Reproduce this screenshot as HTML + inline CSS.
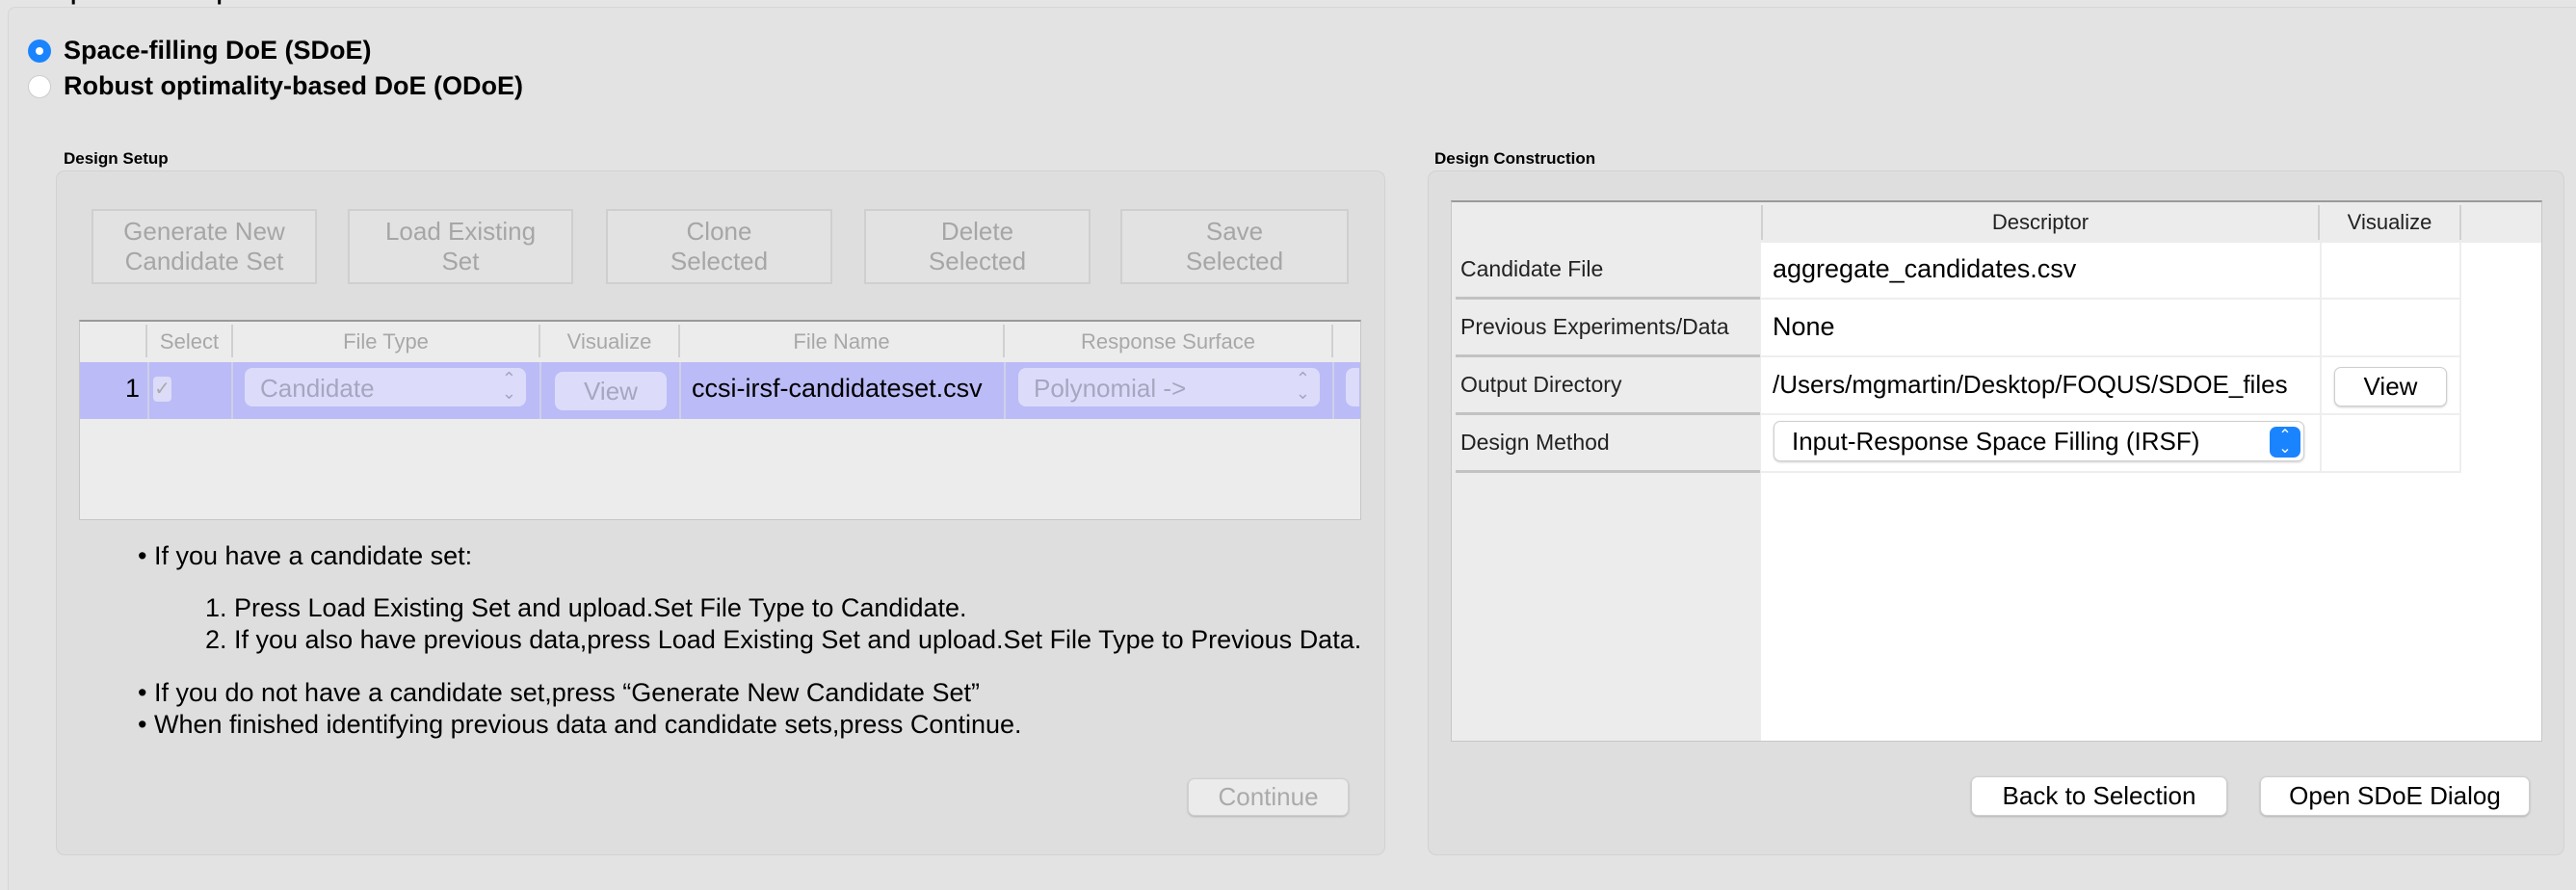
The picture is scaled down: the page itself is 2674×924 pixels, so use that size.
<!DOCTYPE html>
<html style="overflow:hidden;height:924px"><head><meta charset="utf-8"><style>
*{box-sizing:border-box;margin:0;padding:0}
body{width:2674px;height:924px;background:#e5e5e5;font-family:"Liberation Sans",sans-serif;position:relative;overflow:hidden;color:#000}
.a{position:absolute}
.outer{left:8px;top:7px;width:2680px;height:917px;border:1px solid #d6d6d6;border-bottom:none;border-radius:8px 8px 0 0;background:#e3e3e3}
.radio{width:24px;height:24px;border-radius:50%}
.lbl{font-size:27px;font-weight:bold;white-space:nowrap}
.grp{background:#dedede;border:1px solid #d2d2d2;border-radius:9px}
.btn{border:2px solid #cfcfcf;background:#e2e2e2;color:#a6a6a6;font-size:26px;text-align:center;line-height:31px;display:flex;align-items:center;justify-content:center}
.th{font-size:22px;color:#a8a8a8;text-align:center;line-height:36px;border-right:2px solid #d0d0d0}
.txt{font-size:27px;white-space:nowrap}
.pb{background:#fff;border:1px solid #cfcfcf;border-radius:7px;box-shadow:0 1px 2px rgba(0,0,0,.2);font-size:26px;text-align:center}
.rl{font-size:23px;color:#222;white-space:nowrap}
</style></head><body>
<div class="a outer"></div>
<div class="a" style="left:56px;top:-20px;font-size:22px;font-weight:bold">Options and Steps</div>
<div class="a radio" style="left:29px;top:41px;background:#1a84ff"></div>
<div class="a radio" style="left:37px;top:49px;width:8px;height:8px;background:#fff"></div>
<div class="a lbl" style="left:66px;top:37px">Space-filling DoE (SDoE)</div>
<div class="a radio" style="left:29px;top:78px;background:#fff;border:1px solid #ccc"></div>
<div class="a lbl" style="left:66px;top:74px">Robust optimality-based DoE (ODoE)</div>

<div class="a" style="left:66px;top:155px;font-size:17px;font-weight:bold">Design Setup</div>
<div class="a grp" style="left:58px;top:177px;width:1380px;height:711px"></div>
<div class="a btn" style="left:95px;top:217px;width:234px;height:78px">Generate New<br>Candidate Set</div>
<div class="a btn" style="left:361px;top:217px;width:234px;height:78px">Load Existing<br>Set</div>
<div class="a btn" style="left:629px;top:217px;width:235px;height:78px">Clone<br>Selected</div>
<div class="a btn" style="left:897px;top:217px;width:235px;height:78px">Delete<br>Selected</div>
<div class="a btn" style="left:1163px;top:217px;width:237px;height:78px">Save<br>Selected</div>

<div class="a" style="left:82px;top:332px;width:1331px;height:208px;background:#ececec;border:1px solid #c6c6c6;border-top:2px solid #9a9a9a"></div>
<div class="a th" style="left:83px;top:337px;width:70px;height:34px"></div>
<div class="a th" style="left:153px;top:337px;width:89px;height:34px">Select</div>
<div class="a th" style="left:242px;top:337px;width:319px;height:34px">File Type</div>
<div class="a th" style="left:561px;top:337px;width:145px;height:34px">Visualize</div>
<div class="a th" style="left:706px;top:337px;width:337px;height:34px">File Name</div>
<div class="a th" style="left:1043px;top:337px;width:341px;height:34px">Response Surface</div>
<div class="a" style="left:83px;top:376px;width:1329px;height:59px;background:#bbbbf7"></div>
<div class="a" style="left:153px;top:376px;width:2px;height:59px;background:#cfcfe8"></div>
<div class="a" style="left:240px;top:376px;width:2px;height:59px;background:#cfcfe8"></div>
<div class="a" style="left:560px;top:376px;width:2px;height:59px;background:#cfcfe8"></div>
<div class="a" style="left:705px;top:376px;width:2px;height:59px;background:#cfcfe8"></div>
<div class="a" style="left:1042px;top:376px;width:2px;height:59px;background:#cfcfe8"></div>
<div class="a" style="left:1383px;top:376px;width:2px;height:59px;background:#cfcfe8"></div>
<div class="a txt" style="left:130px;top:388px">1</div>
<div class="a" style="left:159px;top:391px;width:19px;height:26px;border-radius:4px;background:#dcdcf8;color:#aaa;font-size:20px;text-align:center">✓</div>
<div class="a" style="left:254px;top:382px;width:292px;height:40px;border-radius:8px;background:#dcdcfa;color:#a6a6c0;font-size:26px;padding:6px 16px">Candidate<span style="position:absolute;right:10px;top:4px;font-size:18px;line-height:15px">⌃<br>⌄</span></div>
<div class="a" style="left:576px;top:386px;width:116px;height:40px;border-radius:8px;background:#dcdcfa;color:#a6a6c0;font-size:26px;text-align:center;line-height:40px">View</div>
<div class="a txt" style="left:718px;top:388px">ccsi-irsf-candidateset.csv</div>
<div class="a" style="left:1057px;top:382px;width:313px;height:40px;border-radius:8px;background:#dcdcfa;color:#a6a6c0;font-size:26px;padding:6px 16px">Polynomial -&gt;<span style="position:absolute;right:10px;top:4px;font-size:18px;line-height:15px">⌃<br>⌄</span></div>
<div class="a" style="left:1397px;top:382px;width:14px;height:40px;border-radius:8px 0 0 8px;background:#dcdcfa"></div>

<div class="a txt" style="left:143px;top:562px">• If you have a candidate set:</div>
<div class="a txt" style="left:213px;top:616px">1. Press Load Existing Set and upload.Set File Type to Candidate.</div>
<div class="a txt" style="left:213px;top:649px">2. If you also have previous data,press Load Existing Set and upload.Set File Type to Previous Data.</div>
<div class="a txt" style="left:143px;top:704px">• If you do not have a candidate set,press “Generate New Candidate Set”</div>
<div class="a txt" style="left:143px;top:737px">• When finished identifying previous data and candidate sets,press Continue.</div>
<div class="a pb" style="left:1233px;top:808px;width:167px;height:39px;background:#ebebeb;color:#aaa;line-height:37px">Continue</div>

<div class="a" style="left:1489px;top:155px;font-size:17px;font-weight:bold">Design Construction</div>
<div class="a grp" style="left:1482px;top:177px;width:1180px;height:711px"></div>
<div class="a" style="left:1506px;top:208px;width:1133px;height:562px;background:#fff;border:1px solid #c6c6c6;border-top:2px solid #9a9a9a"></div>
<div class="a" style="left:1507px;top:210px;width:1131px;height:42px;background:#ececec"></div>
<div class="a" style="left:1507px;top:210px;width:321px;height:559px;background:#ececec"></div>
<div class="a th" style="left:1828px;top:213px;width:580px;height:36px;color:#222;border-left:2px solid #d0d0d0">Descriptor</div>
<div class="a th" style="left:2408px;top:213px;width:147px;height:36px;color:#222">Visualize</div>
<div class="a" style="left:1828px;top:252px;width:727px;height:238px;border-right:2px solid #eee"></div>
<div class="a" style="left:2408px;top:252px;width:2px;height:238px;background:#eee"></div>
<div class="a" style="left:1511px;top:308px;width:316px;height:3px;background:#c2c2c2"></div>
<div class="a" style="left:1511px;top:368px;width:316px;height:3px;background:#c2c2c2"></div>
<div class="a" style="left:1511px;top:428px;width:316px;height:3px;background:#c2c2c2"></div>
<div class="a" style="left:1511px;top:488px;width:316px;height:3px;background:#c2c2c2"></div>
<div class="a" style="left:1828px;top:309px;width:727px;height:2px;background:#eee"></div>
<div class="a" style="left:1828px;top:369px;width:727px;height:2px;background:#eee"></div>
<div class="a" style="left:1828px;top:429px;width:727px;height:2px;background:#eee"></div>
<div class="a" style="left:1828px;top:489px;width:727px;height:2px;background:#eee"></div>
<div class="a rl" style="left:1516px;top:266px">Candidate File</div>
<div class="a rl" style="left:1516px;top:326px">Previous Experiments/Data</div>
<div class="a rl" style="left:1516px;top:386px">Output Directory</div>
<div class="a rl" style="left:1516px;top:446px">Design Method</div>
<div class="a txt" style="left:1840px;top:264px">aggregate_candidates.csv</div>
<div class="a txt" style="left:1840px;top:324px">None</div>
<div class="a txt" style="left:1840px;top:384px;font-size:26px">/Users/mgmartin/Desktop/FOQUS/SDOE_files</div>
<div class="a pb" style="left:2423px;top:381px;width:117px;height:41px;line-height:39px">View</div>
<div class="a pb" style="left:1841px;top:437px;width:551px;height:42px;text-align:left;padding-left:18px;line-height:40px">Input-Response Space Filling (IRSF)<span style="position:absolute;right:3px;top:5px;width:32px;height:32px;border-radius:7px;background:#1a84ff;color:#fff;font-size:16px;line-height:13px;text-align:center;padding-top:3px">⌃<br>⌄</span></div>
<div class="a pb" style="left:2046px;top:806px;width:266px;height:41px;line-height:39px">Back to Selection</div>
<div class="a pb" style="left:2346px;top:806px;width:280px;height:41px;line-height:39px">Open SDoE Dialog</div>
</body></html>
